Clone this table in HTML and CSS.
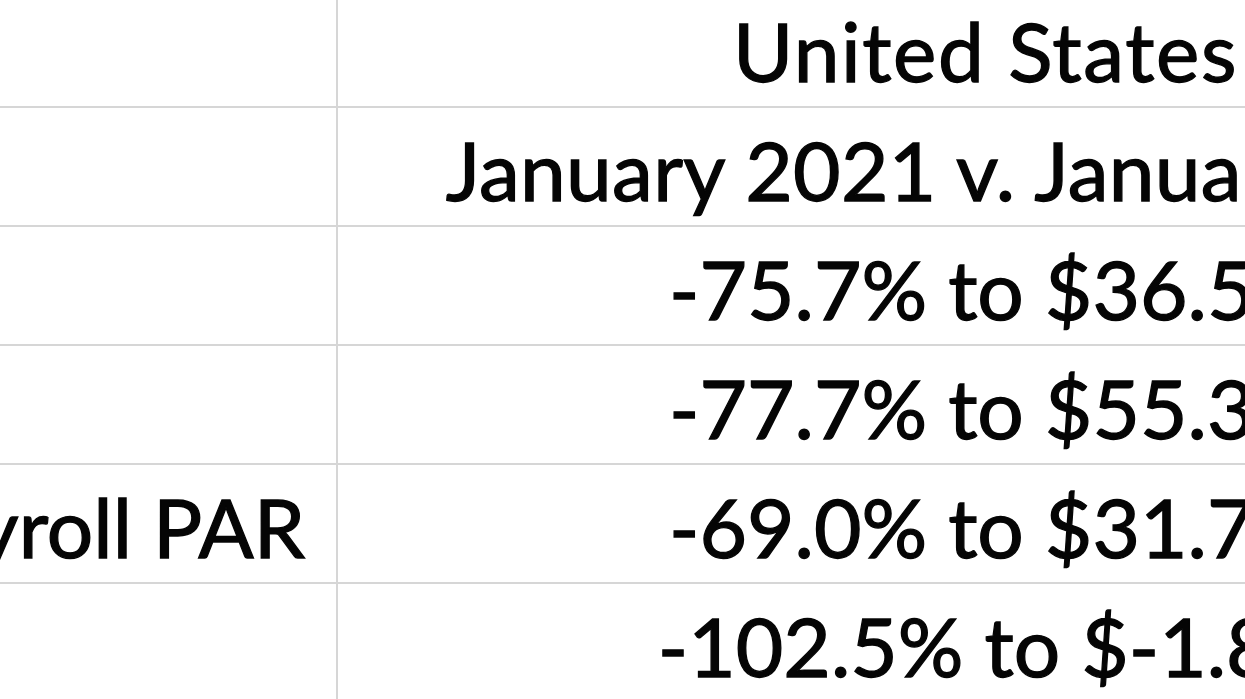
FILE: index.html
```html
<!DOCTYPE html>
<html lang="en">
<head>
<meta charset="utf-8">
<title>United States</title>
<link rel="stylesheet" href="styles.css">
</head>
<body>
<div class="viewport">
  <div class="sheet">
    <div class="row">
      <div class="cell label"></div>
      <div class="cell value head">United States</div>
    </div>
    <div class="row">
      <div class="cell label"></div>
      <div class="cell value period">January 2021 v. January 2020</div>
    </div>
    <div class="row">
      <div class="cell label">RevPAR</div>
      <div class="cell value">-75.7% to $36.51</div>
    </div>
    <div class="row">
      <div class="cell label">TRevPAR</div>
      <div class="cell value">-77.7% to $55.38</div>
    </div>
    <div class="row">
      <div class="cell label sub">Total Payroll PAR</div>
      <div class="cell value">-69.0% to $31.77</div>
    </div>
    <div class="row">
      <div class="cell label">GOPPAR</div>
      <div class="cell value neg">-102.5% to $-1.83</div>
    </div>
  </div>
</div>
</body>
</html>
```

FILE: styles.css
```css
html, body {
  margin: 0;
  padding: 0;
  background: #ffffff;
}

.viewport {
  width: 1245px;
  height: 699px;
  overflow: hidden;
  background: #ffffff;
}

.sheet {
  display: grid;
  grid-template-columns: 738px 1295px;
  margin-top: -11px;
  margin-left: -400px;
  width: 2033px;
  font-family: Lato, "Open Sans", sans-serif;
  font-size: 82px;
  color: #050505;
  -webkit-text-stroke: 1.3px #050505;
}

.row {
  display: contents;
}

.cell {
  box-sizing: border-box;
  height: 119px;
  border-bottom: 2px solid #d6d6d6;
  display: flex;
  align-items: center;
  white-space: nowrap;
  overflow: hidden;
  line-height: 1;
  padding-top: 5px;
}

.label {
  border-right: 2px solid #d6d6d6;
  padding-left: 54px;
}

.label.sub {
  padding-left: 94px;
}

.value {
  justify-content: center;
}

.head {
  letter-spacing: 1.6px;
}

.period {
  letter-spacing: 0.3px;
}

.neg {
  padding-left: 8px;
}
```
